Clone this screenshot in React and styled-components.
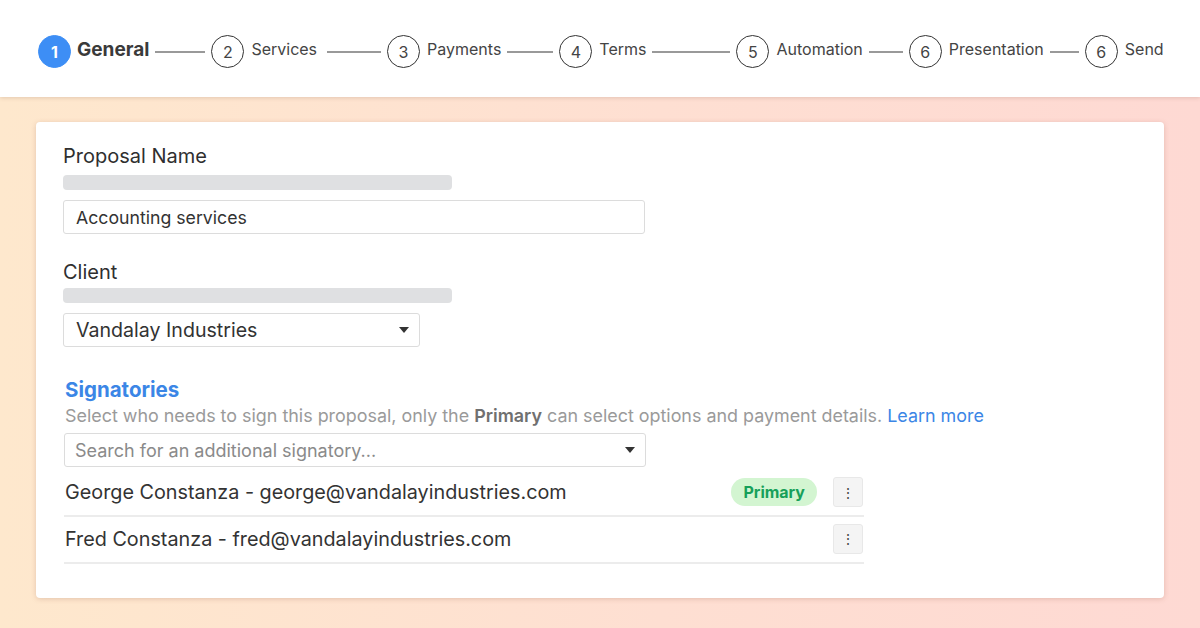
import React from "react";
import styled, { createGlobalStyle } from "styled-components";

const GlobalStyle = createGlobalStyle`
  html, body {
    margin: 0;
    padding: 0;
  }
  body {
    font-family: Inter, "Helvetica Neue", Arial, sans-serif;
    color: #333;
    background: linear-gradient(90deg, #fee8cd 0%, #fedfd2 55%, #fed9d3 100%);
    min-height: 628px;
  }
`;

const steps = [
  { n: 1, label: "General", line: 50, active: true },
  { n: 2, label: "Services", line: 54, gap: 10 },
  { n: 3, label: "Payments", line: 46 },
  { n: 4, label: "Terms", line: 78 },
  { n: 5, label: "Automation", line: 34 },
  { n: 6, label: "Presentation", line: 29 },
  { n: 6, label: "Send" }
];

export default function App() {
  return (
    <>
      <GlobalStyle />
      <Header>
        <Stepper>
          {steps.map((s, i) => (
            <Step key={i}>
              <Circle active={s.active}>{s.n}</Circle>
              <StepLabel active={s.active}>{s.label}</StepLabel>
              {s.line && <Connector gap={s.gap} style={{ width: s.line }} />}
            </Step>
          ))}
        </Stepper>
      </Header>

      <Main>
        <Card>
          <FieldLabel>Proposal Name</FieldLabel>
          <Placeholder />
          <Input>Accounting services</Input>

          <FieldLabel top={26}>Client</FieldLabel>
          <Placeholder tight />
          <Select width={357} large>
            Vandalay Industries
            <Caret />
          </Select>

          <SectionTitle>Signatories</SectionTitle>
          <Help>
            Select who needs to sign this proposal, only the <strong>Primary</strong> can
            select options and payment details. <HelpLink>Learn more</HelpLink>
          </Help>
          <Select width={582} muted>
            Search for an additional signatory...
            <Caret />
          </Select>

          <SignerList>
            <Signer>
              <SignerName>George Constanza - george@vandalayindustries.com</SignerName>
              <Badge>Primary</Badge>
              <MenuButton>⋮</MenuButton>
            </Signer>
            <Signer>
              <SignerName>Fred Constanza - fred@vandalayindustries.com</SignerName>
              <MenuButton>⋮</MenuButton>
            </Signer>
          </SignerList>
        </Card>
      </Main>
    </>
  );
}

const Header = styled.header`
  height: 97px;
  background: #fff;
  box-shadow: 0 1px 4px rgba(120, 80, 60, 0.2);
  display: flex;
  align-items: center;
  padding: 6px 0 0 38px;
  box-sizing: border-box;
  position: relative;
`;

const Stepper = styled.div`
  display: flex;
  align-items: center;
`;

const Step = styled.div`
  display: flex;
  align-items: center;
`;

const Circle = styled.div`
  width: 33px;
  height: 33px;
  box-sizing: border-box;
  border-radius: 50%;
  border: 1px solid ${p => (p.active ? "#3d8ef5" : "#333")};
  background: ${p => (p.active ? "#3d8ef5" : "#fff")};
  color: ${p => (p.active ? "#fff" : "#444")};
  font-size: 16px;
  font-weight: ${p => (p.active ? 700 : 400)};
  display: flex;
  align-items: center;
  justify-content: center;
`;

const StepLabel = styled.span`
  margin-left: ${p => (p.active ? "6px" : "7px")};
  margin-top: -5px;
  font-size: ${p => (p.active ? "19px" : "16px")};
  font-weight: ${p => (p.active ? 700 : 400)};
  color: ${p => (p.active ? "#3a3a3a" : "#444")};
`;

const Connector = styled.div`
  height: 2px;
  background: #999;
  margin: 0 6px 0 ${p => p.gap || 6}px;
`;

const Main = styled.main`
  padding: 25px 36px 30px;
`;

const Card = styled.section`
  background: #fff;
  border-radius: 4px;
  box-shadow: 0 1px 5px rgba(150, 90, 70, 0.25);
  padding: 22px 27px 0;
  height: 476px;
  box-sizing: border-box;
`;

const FieldLabel = styled.div`
  font-size: 20px;
  color: #2f2f2f;
  line-height: 24px;
  margin-top: ${p => (p.top ? p.top + "px" : "0")};
`;

const Placeholder = styled.div`
  width: 389px;
  height: 15px;
  background: #dfe0e2;
  border-radius: 4px;
  margin: ${p => (p.tight ? "4px 0 10px" : "7px 0 10px")};
`;

const Input = styled.div`
  width: 582px;
  height: 34px;
  box-sizing: border-box;
  border: 1px solid #dcdcdc;
  border-radius: 3px;
  padding: 0 12px;
  display: flex;
  align-items: center;
  font-size: 17.7px;
  color: #333;
`;

const Select = styled.div`
  width: ${p => p.width}px;
  height: 34px;
  box-sizing: border-box;
  border: 1px solid #dcdcdc;
  border-radius: 3px;
  padding: 0 10px 0 ${p => (p.muted ? "10px" : "12px")};
  display: flex;
  align-items: center;
  justify-content: space-between;
  font-size: ${p => (p.large ? "19.6px" : "18px")};
  color: ${p => (p.muted ? "#8a8a8a" : "#333")};
  margin-left: ${p => (p.muted ? "1px" : "0")};
`;

const Caret = styled.span`
  width: 0;
  height: 0;
  border-left: 5px solid transparent;
  border-right: 5px solid transparent;
  border-top: 6px solid #333;
`;

const SectionTitle = styled.h3`
  margin: 30px 0 0 2px;
  font-size: 20.5px;
  font-weight: 700;
  color: #3b86e6;
  line-height: 26px;
`;

const Help = styled.p`
  margin: 1px 0 5px 2px;
  font-size: 17.9px;
  line-height: 24px;
  color: #9a9a9a;

  strong {
    color: #707070;
    font-weight: 600;
  }
`;

const HelpLink = styled.a`
  color: #3b86e6;
  cursor: pointer;
`;

const SignerList = styled.div`
  width: 800px;
  margin: 4px 0 0 1px;
`;

const Signer = styled.div`
  display: flex;
  align-items: center;
  height: 46px;
  box-sizing: border-box;
  border-bottom: 2px solid #ececec;
  padding: 0 1px 2px 1px;
  & + & {
    height: 47px;
  }
`;

const SignerName = styled.span`
  flex: 1;
  font-size: 19.8px;
  color: #333;
`;

const Badge = styled.span`
  background: #d3f5d1;
  color: #17a05a;
  font-weight: 700;
  font-size: 16px;
  padding: 0 12px;
  height: 28px;
  border-radius: 14px;
  display: flex;
  align-items: center;
  margin-right: 16px;
`;

const MenuButton = styled.button`
  width: 30px;
  height: 30px;
  border: 1px solid #e8e8e8;
  background: #f4f4f4;
  border-radius: 3px;
  color: #444;
  font-size: 14px;
  padding: 0;
  display: flex;
  align-items: center;
  justify-content: center;
  font-family: inherit;
`;
